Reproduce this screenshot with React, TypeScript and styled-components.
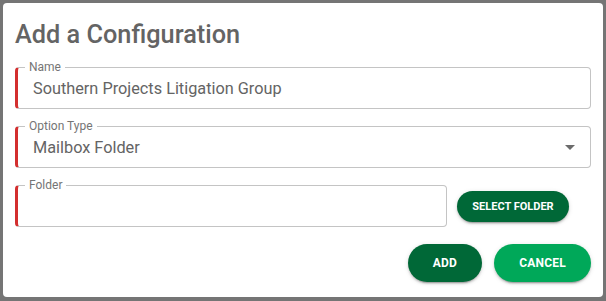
import React from "react";
import styled, { createGlobalStyle } from "styled-components";

const Global = createGlobalStyle`
  html, body { margin: 0; padding: 0; background: #757575; }
  body { font-family: Roboto, "Liberation Sans", sans-serif; }
`;

const Frame = styled.div`
  width: 606px;
  height: 301px;
  box-sizing: border-box;
  padding: 3px 3px 4px 3px;
  background: #757575;
`;

const Dialog = styled.div`
  height: 100%;
  box-sizing: border-box;
  background: #fff;
  border-radius: 4px;
  padding: 16px 12px 15px 12px;
  display: flex;
  flex-direction: column;
`;

const Title = styled.h2`
  margin: 0 0 16px 0;
  font-size: 25.3px;
  line-height: 32px;
  font-weight: 500;
  color: #646464;
`;

const Fields = styled.div`
  display: flex;
  flex-direction: column;
  gap: 17px;
`;

const Row = styled.div`
  display: flex;
  align-items: center;
  gap: 10px;
`;

const Field = styled.div<{ $grow?: boolean }>`
  position: relative;
  flex: ${(p) => (p.$grow ? "1 1 auto" : "none")};
  height: 42px;
  box-sizing: border-box;
  border: 1px solid #c4c4c4;
  border-left: 3px solid #d32f2f;
  border-radius: 4px;
  display: flex;
  align-items: center;
  padding: 0 14px 0 15px;
`;

const Label = styled.span`
  position: absolute;
  left: 7px;
  top: -8px;
  padding: 0 4px;
  background: #fff;
  font-size: 12px;
  line-height: 14px;
  color: #757575;
`;

const Value = styled.span`
  flex: 1;
  font-size: 16.3px;
  color: #646464;
  white-space: nowrap;
`;

const Caret = styled.svg`
  width: 10px;
  height: 5px;
  margin-right: 1px;
`;

const Pill = styled.button<{ $tone: "dark" | "light"; $w: number; $h: number; $small?: boolean }>`
  width: ${(p) => p.$w}px;
  height: ${(p) => p.$h}px;
  border: none;
  border-radius: ${(p) => p.$h / 2}px;
  background: ${(p) => (p.$tone === "dark" ? "#006837" : "#00a859")};
  color: #fff;
  font-family: Roboto, "Liberation Sans", sans-serif;
  font-weight: 700;
  font-size: ${(p) => (p.$small ? "11px" : "12px")};
  letter-spacing: ${(p) => (p.$small ? "0" : "0.2px")};
  text-transform: uppercase;
  box-shadow: 0 3px 1px -2px rgba(0,0,0,0.2), 0 2px 2px 0 rgba(0,0,0,0.14), 0 1px 5px 0 rgba(0,0,0,0.12);
  padding: 0;
  flex: none;
`;

const SelectWrap = styled.div`
  margin-right: 22px;
  display: flex;
`;

const Actions = styled.div`
  margin-top: 17px;
  display: flex;
  justify-content: flex-end;
  gap: 12px;
`;

export default function App() {
  return (
    <Frame>
      <Global />
      <Dialog>
        <Title>Add a Configuration</Title>
        <Fields>
          <Field>
            <Label>Name</Label>
            <Value>Southern Projects Litigation Group</Value>
          </Field>
          <Field>
            <Label>Option Type</Label>
            <Value>Mailbox Folder</Value>
            <Caret viewBox="0 0 10 5">
              <path d="M0 0 L10 0 L5 5 Z" fill="#6b6b6b" />
            </Caret>
          </Field>
          <Row>
            <Field $grow>
              <Label>Folder</Label>
              <Value />
            </Field>
            <SelectWrap>
              <Pill $tone="dark" $w={112} $h={31} $small>Select Folder</Pill>
            </SelectWrap>
          </Row>
        </Fields>
        <Actions>
          <Pill $tone="dark" $w={74} $h={38}>Add</Pill>
          <Pill $tone="light" $w={97} $h={38}>Cancel</Pill>
        </Actions>
      </Dialog>
    </Frame>
  );
}
